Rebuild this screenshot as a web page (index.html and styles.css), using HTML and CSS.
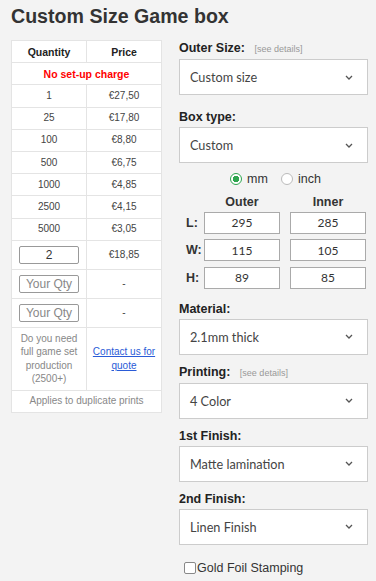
FILE: index.html
```html
<!DOCTYPE html>
<html lang="en">
<head>
  <meta charset="UTF-8" />
  <meta name="viewport" content="width=device-width, initial-scale=1.0"/>
  <title>Custom Size Game box</title>
  <link rel="stylesheet" href="styles.css">
</head>
<body>
  <h1>Custom Size Game box</h1>

  <div class="layout">
    <!-- price table -->
    <table class="prices">
      <tr><th>Quantity</th><th>Price</th></tr>
      <tr><td colspan="2" class="no-setup">No set-up charge</td></tr>
      <tr><td>1</td><td>€27,50</td></tr>
      <tr><td>25</td><td>€17,80</td></tr>
      <tr><td>100</td><td>€8,80</td></tr>
      <tr><td>500</td><td>€6,75</td></tr>
      <tr><td>1000</td><td>€4,85</td></tr>
      <tr><td>2500</td><td>€4,15</td></tr>
      <tr><td>5000</td><td>€3,05</td></tr>
      <tr class="qty-row"><td><input class="qty" type="text" value="2"></td><td>€18,85</td></tr>
      <tr class="qty-row"><td><input class="qty" type="text" placeholder="Your Qty"></td><td>-</td></tr>
      <tr class="qty-row"><td><input class="qty" type="text" placeholder="Your Qty"></td><td>-</td></tr>
      <tr class="full-set">
        <td class="muted">Do you need full game set production (2500+)</td>
        <td><a href="#">Contact us for quote</a></td>
      </tr>
      <tr><td colspan="2" class="muted">Applies to duplicate prints</td></tr>
    </table>

    <!-- options -->
    <div class="options">
      <div class="field">
        <div class="label">Outer Size: <span class="details">[see details]</span></div>
        <div class="select"><span>Custom size</span>
          <svg width="8" height="5" viewBox="0 0 8 5"><path d="M1 1l3 3 3-3" fill="none" stroke="#555" stroke-width="1.3"/></svg>
        </div>
      </div>

      <div class="field">
        <div class="label">Box type:</div>
        <div class="select"><span>Custom</span>
          <svg width="8" height="5" viewBox="0 0 8 5"><path d="M1 1l3 3 3-3" fill="none" stroke="#555" stroke-width="1.3"/></svg>
        </div>
      </div>

      <div class="units">
        <label><span class="radio on"></span>mm</label>
        <label><span class="radio"></span>inch</label>
      </div>

      <div class="dims">
        <span></span><span class="dim-head">Outer</span><span class="dim-head">Inner</span>
        <span class="dim-label">L:</span><input class="dim" type="text" value="295"><input class="dim" type="text" value="285">
        <span class="dim-label">W:</span><input class="dim" type="text" value="115"><input class="dim" type="text" value="105">
        <span class="dim-label">H:</span><input class="dim" type="text" value="89"><input class="dim" type="text" value="85">
      </div>

      <div class="field tight">
        <div class="label">Material:</div>
        <div class="select"><span>2.1mm thick</span>
          <svg width="8" height="5" viewBox="0 0 8 5"><path d="M1 1l3 3 3-3" fill="none" stroke="#555" stroke-width="1.3"/></svg>
        </div>
      </div>

      <div class="field tight">
        <div class="label">Printing: <span class="details">[see details]</span></div>
        <div class="select"><span>4 Color</span>
          <svg width="8" height="5" viewBox="0 0 8 5"><path d="M1 1l3 3 3-3" fill="none" stroke="#555" stroke-width="1.3"/></svg>
        </div>
      </div>

      <div class="field tight">
        <div class="label">1st Finish:</div>
        <div class="select"><span>Matte lamination</span>
          <svg width="8" height="5" viewBox="0 0 8 5"><path d="M1 1l3 3 3-3" fill="none" stroke="#555" stroke-width="1.3"/></svg>
        </div>
      </div>

      <div class="field tight">
        <div class="label">2nd Finish:</div>
        <div class="select"><span>Linen Finish</span>
          <svg width="8" height="5" viewBox="0 0 8 5"><path d="M1 1l3 3 3-3" fill="none" stroke="#555" stroke-width="1.3"/></svg>
        </div>
      </div>

      <label class="check"><span class="box"></span>Gold Foil Stamping</label>
    </div>
  </div>
</body>
</html>
```

FILE: styles.css
```css
body {
  margin: 0;
  padding: 0 8px 0 11px;
  background: #f3f3f3;
  font-family: 'Liberation Sans', Arial, sans-serif;
  color: #333;
}

h1 {
  font-size: 19.6px;
  line-height: 22px;
  margin: 5px 0 13px;
  color: #333;
}

.layout {
  display: flex;
  gap: 17px;
  align-items: flex-start;
}

/* price table */
.prices {
  width: 151px;
  border-collapse: collapse;
  background: #fff;
  font-size: 10px;
  color: #444;
  text-align: center;
  flex-shrink: 0;
}

.prices th,
.prices td {
  border: 1px solid #e4e4e4;
  padding: 4.6px 2px;
  line-height: 12px;
  width: 50%;
}

.prices th {
  color: #222;
  font-size: 10.5px;
}

.prices .no-setup {
  color: #ff0000;
  font-weight: bold;
  font-size: 10.5px;
}

.qty-row td {
  padding: 5px 2px;
}

.qty {
  display: block;
  margin: 0 auto;
  width: 60px;
  height: 18px;
  box-sizing: border-box;
  border: 1px solid #999;
  border-radius: 2px;
  text-align: center;
  font-family: 'Liberation Sans', Arial, sans-serif;
  font-size: 12px;
  color: #333;
  padding: 0;
}

.qty::placeholder {
  color: #888;
}

.prices .muted {
  color: #888;
}

.full-set td {
  line-height: 13.5px;
  padding: 4px 2px;
}

.full-set a {
  color: #2a5bd7;
}

/* option column */
.options {
  width: 189px;
}

.field {
  margin-bottom: 14px;
}

.field.tight {
  margin-bottom: 9px;
}

.label {
  font-size: 12.5px;
  font-weight: bold;
  line-height: 16px;
  color: #222;
  margin-bottom: 2px;
}

.details {
  font-size: 9px;
  font-weight: normal;
  color: #999;
  margin-left: 6px;
}

.select {
  height: 36px;
  box-sizing: border-box;
  background: #fff;
  border: 1px solid #ccc;
  display: flex;
  align-items: center;
  justify-content: space-between;
  padding: 0 14px 0 10px;
  font-family: 'Lato', 'Noto Sans', sans-serif;
  font-size: 12.7px;
  color: #444;
}

.units {
  display: flex;
  justify-content: center;
  gap: 13px;
  margin: -6px 0 0 4px;
  font-size: 12.5px;
  line-height: 16px;
  color: #333;
}

.units label {
  display: flex;
  align-items: center;
  gap: 5px;
}

.radio {
  width: 12px;
  height: 12px;
  box-sizing: border-box;
  border-radius: 50%;
  border: 1px solid #bbb;
  background: #fff;
}

.radio.on {
  border-color: #2ea54f;
  background: radial-gradient(circle, #2ea54f 0 3px, #fff 3.5px);
}

.dims {
  display: grid;
  grid-template-columns: 15px 76px 76px;
  column-gap: 10px;
  row-gap: 5.5px;
  align-items: center;
  margin: 8px 0 12px;
}

.dim-head {
  text-align: center;
  font-size: 12.5px;
  font-weight: bold;
  color: #333;
  line-height: 14px;
  margin-bottom: -3px;
}

.dim-label {
  font-size: 12.5px;
  font-weight: bold;
  color: #333;
  padding-left: 7px;
}

.dim {
  width: 76px;
  height: 22px;
  box-sizing: border-box;
  border: 1px solid #aaa;
  text-align: center;
  font-family: 'Lato', 'Noto Sans', sans-serif;
  font-size: 12px;
  color: #333;
  padding: 0;
}

.check {
  display: flex;
  align-items: center;
  gap: 1px;
  margin: 16px 0 0 5px;
  font-size: 12.5px;
  color: #333;
}

.box {
  width: 12px;
  height: 12px;
  box-sizing: border-box;
  border: 1px solid #888;
  border-radius: 2px;
  background: #fff;
}
```
